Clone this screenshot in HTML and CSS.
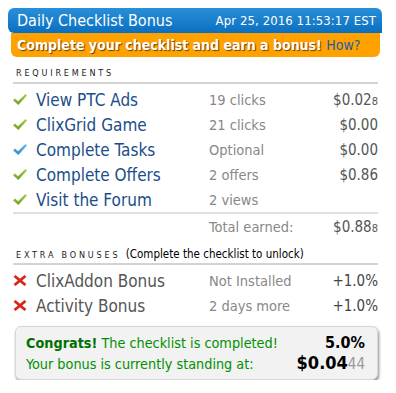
FILE: index.html
```html
<!DOCTYPE html>
<html>
<head>
<meta charset="utf-8">
<link rel="stylesheet" href="styles.css">
</head>
<body>
<svg width="0" height="0" class="defs">
  <defs>
    <linearGradient id="gg" x1="0" y1="0" x2="0" y2="1">
      <stop offset="0" stop-color="#a9d04a"/>
      <stop offset="1" stop-color="#6f9e22"/>
    </linearGradient>
    <linearGradient id="bg" x1="0" y1="0" x2="0" y2="1">
      <stop offset="0" stop-color="#6cc0ec"/>
      <stop offset="1" stop-color="#2f86c0"/>
    </linearGradient>
  </defs>
</svg>
<div class="widget">
  <div class="head">
    <span class="title">Daily Checklist Bonus</span>
    <span class="date">Apr 25, 2016 11:53:17 EST</span>
  </div>
  <div class="promo">Complete your checklist and earn a bonus! <a class="how">How?</a></div>

  <div class="section">
    <div class="sec-title">REQUIREMENTS</div>
    <div class="rows">
      <div class="row">
        <span class="ico"><svg class="check" viewBox="0 0 14 11"><path d="M0 6.3 L2.1 4.6 L5 7.2 L12.4 0 L14 1.5 L5.3 11 Z"/></svg></span>
        <span class="label">View PTC Ads</span><span class="info">19 clicks</span><span class="amt">$0.02<small>8</small></span>
      </div>
      <div class="row">
        <span class="ico"><svg class="check" viewBox="0 0 14 11"><path d="M0 6.3 L2.1 4.6 L5 7.2 L12.4 0 L14 1.5 L5.3 11 Z"/></svg></span>
        <span class="label">ClixGrid Game</span><span class="info">21 clicks</span><span class="amt">$0.00</span>
      </div>
      <div class="row">
        <span class="ico"><svg class="check blue" viewBox="0 0 14 11"><path d="M0 6.3 L2.1 4.6 L5 7.2 L12.4 0 L14 1.5 L5.3 11 Z"/></svg></span>
        <span class="label">Complete Tasks</span><span class="info">Optional</span><span class="amt">$0.00</span>
      </div>
      <div class="row">
        <span class="ico"><svg class="check" viewBox="0 0 14 11"><path d="M0 6.3 L2.1 4.6 L5 7.2 L12.4 0 L14 1.5 L5.3 11 Z"/></svg></span>
        <span class="label">Complete Offers</span><span class="info">2 offers</span><span class="amt">$0.86</span>
      </div>
      <div class="row">
        <span class="ico"><svg class="check" viewBox="0 0 14 11"><path d="M0 6.3 L2.1 4.6 L5 7.2 L12.4 0 L14 1.5 L5.3 11 Z"/></svg></span>
        <span class="label">Visit the Forum</span><span class="info">2 views</span><span class="amt"></span>
      </div>
      <div class="row total">
        <span class="ico"></span><span class="label"></span><span class="info">Total earned:</span><span class="amt">$0.88<small>8</small></span>
      </div>
    </div>
  </div>

  <div class="section extra">
    <div class="sec-title">EXTRA BONUSES <span class="note">(Complete the checklist to unlock)</span></div>
    <div class="rows">
      <div class="row">
        <span class="ico"><svg class="cross" viewBox="0 0 14 11"><path d="M1.5 1 L12.5 10 M12.5 1 L1.5 10"/></svg></span>
        <span class="label grey">ClixAddon Bonus</span><span class="info">Not Installed</span><span class="amt pct">+1.0%</span>
      </div>
      <div class="row">
        <span class="ico"><svg class="cross" viewBox="0 0 14 11"><path d="M1.5 1 L12.5 10 M12.5 1 L1.5 10"/></svg></span>
        <span class="label grey">Activity Bonus</span><span class="info">2 days more</span><span class="amt pct">+1.0%</span>
      </div>
    </div>
  </div>

  <div class="congrats">
    <div class="c-row">
      <span class="c-text"><b>Congrats!</b> The checklist is completed!</span>
      <span class="c-pct">5.0%</span>
    </div>
    <div class="c-row">
      <span class="c-text">Your bonus is currently standing at:</span>
      <span class="c-val">$0.04<small>44</small></span>
    </div>
  </div>
</div>
</body>
</html>
```

FILE: styles.css
```css
html, body {
  margin: 0;
  padding: 0;
  background: #fff;
}
body {
  font-family: "DejaVu Sans Condensed", "DejaVu Sans", sans-serif;
}
.defs {
  position: absolute;
  width: 0;
  height: 0;
}
.widget {
  width: 374px;
  margin: 8px 0 0 8px;
}
.head {
  height: 25px;
  background: linear-gradient(#2a8fd8, #0a6fc0);
  border-radius: 6px 6px 0 6px;
  display: flex;
  justify-content: space-between;
  align-items: center;
  padding: 0 6px 0 9px;
  color: #fff;
}
.title {
  font-size: 16px;
}
.date {
  font-size: 13px;
  letter-spacing: 0.1px;
}
.promo {
  margin: 0 2px 0 3px;
  height: 24px;
  background: #ffa200;
  border-radius: 0 0 6px 6px;
  color: #fff;
  font-weight: bold;
  font-size: 14px;
  line-height: 24px;
  padding-left: 6px;
  text-shadow: 1px 1px 1px #6a4000;
}
.how {
  color: #1a5fa8;
  font-weight: normal;
  text-shadow: none;
}
.section {
  margin: 10px 4px 0 5px;
}
.sec-title {
  font-size: 9px;
  letter-spacing: 2.8px;
  color: #222;
  padding: 0 0 2px 3px;
  height: 13px;
  line-height: 13px;
  border-bottom: 2px solid #d3d3d3;
}
.note {
  letter-spacing: 0;
  font-size: 11.5px;
  color: #000;
}
.rows {
  padding-top: 3px;
}
.row {
  display: flex;
  align-items: center;
  height: 25px;
}
.ico {
  width: 23px;
  display: flex;
  align-items: center;
}
.check {
  width: 14px;
  height: 11px;
  fill: url(#gg);
}
.check.blue {
  fill: url(#bg);
}
.cross {
  width: 14px;
  height: 11px;
  fill: none;
  stroke: #d8261a;
  stroke-width: 2.8;
}
.label {
  width: 173px;
  font-size: 17px;
  color: #1b4d8a;
}
.label.grey {
  color: #555;
}
.info {
  flex: 1;
  font-size: 14.5px;
  color: #888;
}
.amt {
  font-size: 15px;
  color: #555;
  text-align: right;
}
.amt small {
  font-size: 11px;
}
.pct {
  color: #444;
}
.total {
  border-top: 2px solid #e0e0e0;
  height: 25px;
}
.extra {
  margin-top: 9px;
}
.congrats {
  margin: 8px 4px 0 7px;
  background: #f2f2f2;
  border: 1px solid #d6d6d6;
  border-radius: 6px;
  box-shadow: 1px 2px 3px rgba(0,0,0,0.45);
  padding: 6px 12px 6px 10px;
  color: #009000;
  font-size: 14.3px;
}
.c-row {
  display: flex;
  justify-content: space-between;
  align-items: baseline;
  height: 20px;
  line-height: 20px;
}
.c-text b {
  color: #007000;
}
.c-pct {
  color: #000;
  font-weight: bold;
  font-size: 16px;
}
.c-val {
  color: #000;
  font-weight: bold;
  font-size: 18px;
}
.c-val small {
  color: #999;
  font-weight: normal;
  font-size: 15px;
}
```
